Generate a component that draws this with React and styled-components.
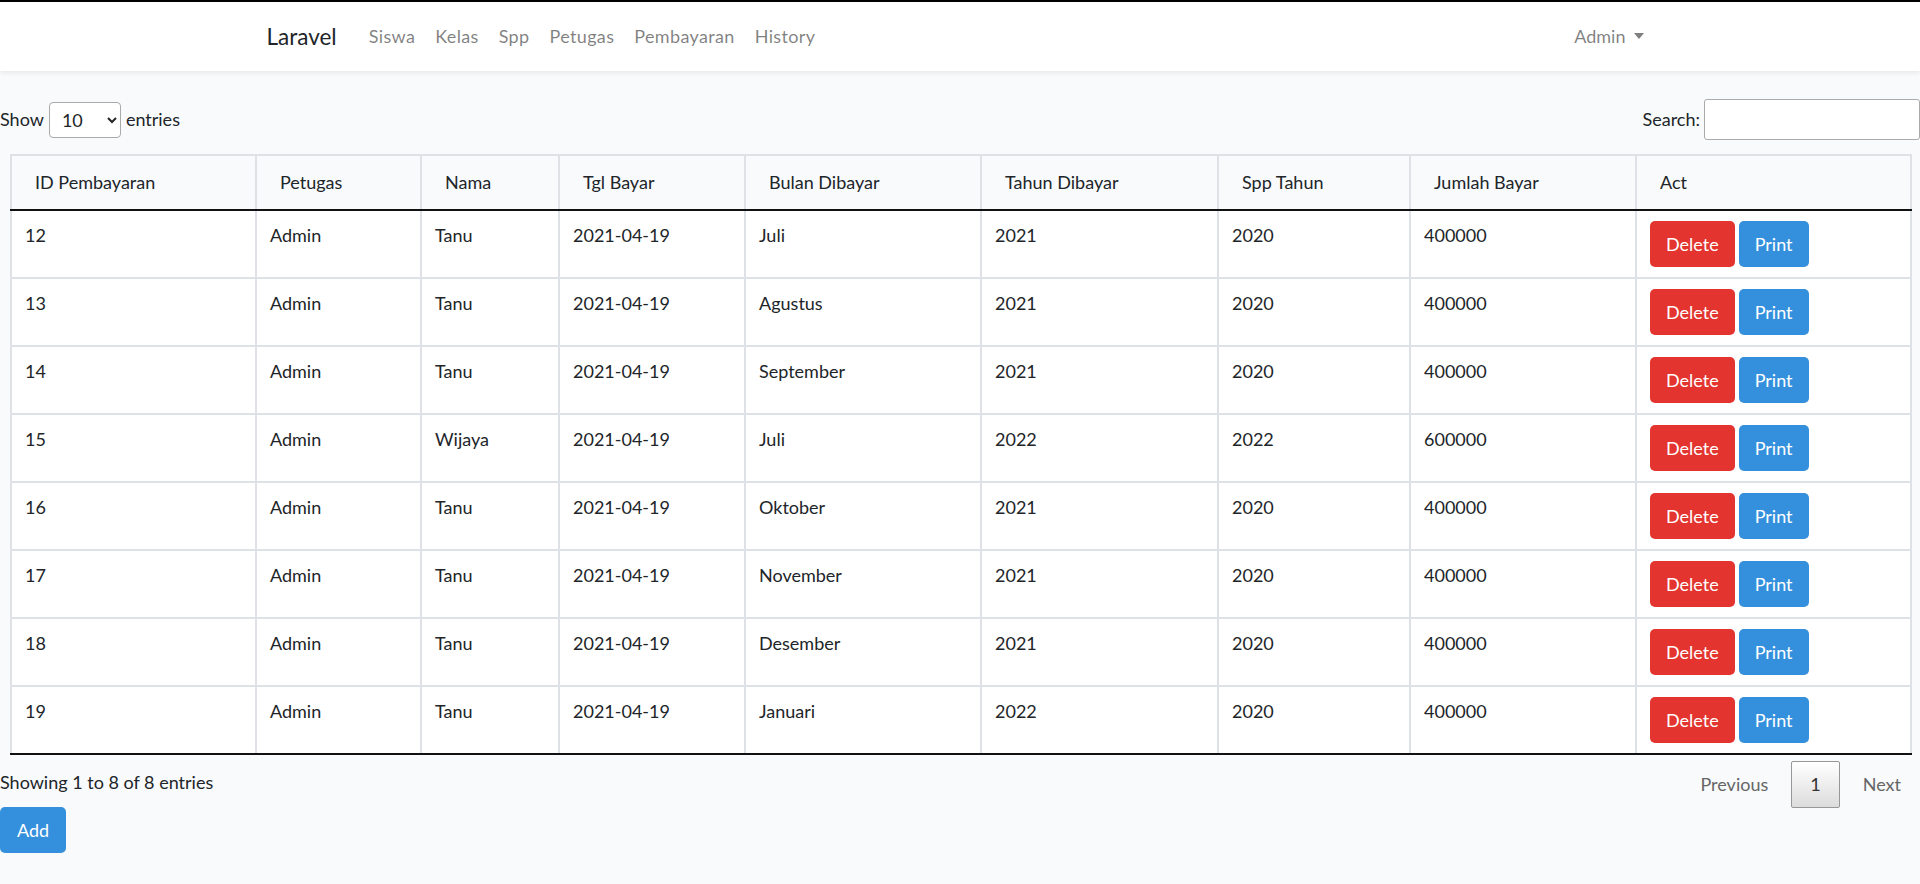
import React from 'react';
import styled, { createGlobalStyle } from 'styled-components';

const GlobalStyle = createGlobalStyle`
  body {
    margin: 0;
    background-color: #f8fafc;
    font-family: 'Lato', 'Open Sans', sans-serif;
    font-size: 18px;
    line-height: 1.6;
    color: #212529;
  }
  * { box-sizing: border-box; }
`;

const Navbar = styled.nav`
  background-color: #fff;
  border-top: 2px solid #000;
  box-shadow: 0 2px 5px rgba(0, 0, 0, 0.075);
  position: relative;
`;

const NavContainer = styled.div`
  width: 1425px;
  margin: 0 auto;
  padding: 0 19px;
  height: 69px;
  display: flex;
  align-items: center;
`;

const Brand = styled.a`
  font-size: 22.5px;
  color: #212529;
  margin-right: 22px;
  text-decoration: none;
`;

const NavLink = styled.a`
  color: rgba(0, 0, 0, 0.5);
  padding: 0 10px;
  letter-spacing: 0.35px;
  text-decoration: none;
`;

const Dropdown = styled.a`
  margin-left: auto;
  padding: 0 10px;
  color: rgba(0, 0, 0, 0.5);
  display: flex;
  align-items: center;
  &::after {
    content: '';
    margin-left: 8px;
    border-top: 6px solid rgba(0, 0, 0, 0.5);
    border-left: 5.5px solid transparent;
    border-right: 5.5px solid transparent;
  }
`;

const Main = styled.main`
  padding-top: 28px;
`;

const Toolbar = styled.div`
  display: flex;
  justify-content: space-between;
  align-items: center;
  height: 41px;
`;

const Label = styled.label`
  display: flex;
  align-items: center;
`;

const Select = styled.select`
  margin: 0 5px;
  width: 72px;
  height: 36px;
  font-family: inherit;
  font-size: 18px;
  padding: 0 8px;
  border: 1px solid #aaa;
  border-radius: 4px;
  background: #fff;
  color: #212529;
`;

const SearchInput = styled.input`
  margin-left: 4px;
  width: 216px;
  height: 41px;
  border: 1px solid #aaa;
  border-radius: 3px;
  background: #fff;
`;

const Table = styled.table`
  margin: 14px 10px 0;
  width: 1900px;
  border-collapse: collapse;
  table-layout: fixed;
`;

const Th = styled.th`
  width: ${(p) => p.$w}px;
  text-align: left;
  font-weight: 400;
  padding: 12px 22px 12px 23px;
  border: 2px solid #dee2e6;
  border-bottom: 2px solid #111;
  white-space: nowrap;
`;

const Tr = styled.tr`
  background-color: #fff;
  &:last-child td {
    border-bottom: 2px solid #111;
  }
`;

const Td = styled.td`
  vertical-align: top;
  padding: 10px 13px;
  border: 2px solid #dee2e6;
  height: 66px;
`;

const Actions = styled.div`
  display: flex;
  gap: 4px;
`;

const Button = styled.button`
  height: 46px;
  padding: 0 ${(p) => (p.$wide ? 17 : 16)}px;
  border: none;
  border-radius: 5px;
  font-family: inherit;
  font-size: 18px;
  color: #fff;
  background-color: ${(p) => (p.$variant === 'danger' ? '#e3342f' : '#3490dc')};
`;

const Footer = styled.div`
  display: flex;
  justify-content: space-between;
  align-items: flex-start;
  padding-top: 6px;
`;

const Info = styled.div`
  padding-top: 7px;
`;

const Pagination = styled.div`
  display: flex;
  align-items: center;
`;

const PageButton = styled.a`
  display: flex;
  align-items: center;
  justify-content: center;
  height: 47px;
  padding: 0 18px;
  margin-left: 4px;
  color: ${(p) => (p.$current ? '#333' : '#666')};
  border: 1px solid ${(p) => (p.$current ? '#979797' : 'transparent')};
  border-radius: 2px;
  background: ${(p) => (p.$current ? 'linear-gradient(to bottom, #fff 0%, #dcdcdc 100%)' : 'transparent')};
`;

const AddRow = styled.div`
  margin-top: -1px;
`;

const columns = [
  ['ID Pembayaran', 245],
  ['Petugas', 165],
  ['Nama', 138],
  ['Tgl Bayar', 186],
  ['Bulan Dibayar', 236],
  ['Tahun Dibayar', 237],
  ['Spp Tahun', 192],
  ['Jumlah Bayar', 226],
  ['Act', 275],
];

const rows = [
  [12, 'Admin', 'Tanu', '2021-04-19', 'Juli', 2021, 2020, 400000],
  [13, 'Admin', 'Tanu', '2021-04-19', 'Agustus', 2021, 2020, 400000],
  [14, 'Admin', 'Tanu', '2021-04-19', 'September', 2021, 2020, 400000],
  [15, 'Admin', 'Wijaya', '2021-04-19', 'Juli', 2022, 2022, 600000],
  [16, 'Admin', 'Tanu', '2021-04-19', 'Oktober', 2021, 2020, 400000],
  [17, 'Admin', 'Tanu', '2021-04-19', 'November', 2021, 2020, 400000],
  [18, 'Admin', 'Tanu', '2021-04-19', 'Desember', 2021, 2020, 400000],
  [19, 'Admin', 'Tanu', '2021-04-19', 'Januari', 2022, 2020, 400000],
];

export default function App() {
  return (
    <>
      <GlobalStyle />
      <Navbar>
        <NavContainer>
          <Brand>Laravel</Brand>
          <NavLink>Siswa</NavLink>
          <NavLink>Kelas</NavLink>
          <NavLink>Spp</NavLink>
          <NavLink>Petugas</NavLink>
          <NavLink>Pembayaran</NavLink>
          <NavLink>History</NavLink>
          <Dropdown>Admin</Dropdown>
        </NavContainer>
      </Navbar>
      <Main>
        <Toolbar>
          <Label>
            Show
            <Select defaultValue="10">
              <option>10</option>
              <option>25</option>
              <option>50</option>
              <option>100</option>
            </Select>
            entries
          </Label>
          <Label>
            Search:
            <SearchInput type="search" />
          </Label>
        </Toolbar>
        <Table>
          <thead>
            <tr>
              {columns.map(([name, w]) => (
                <Th key={name} $w={w}>{name}</Th>
              ))}
            </tr>
          </thead>
          <tbody>
            {rows.map((r) => (
              <Tr key={r[0]}>
                {r.map((v, i) => (
                  <Td key={i}>{v}</Td>
                ))}
                <Td>
                  <Actions>
                    <Button $variant="danger">Delete</Button>
                    <Button>Print</Button>
                  </Actions>
                </Td>
              </Tr>
            ))}
          </tbody>
        </Table>
        <Footer>
          <Info>Showing 1 to 8 of 8 entries</Info>
          <Pagination>
            <PageButton>Previous</PageButton>
            <PageButton $current>1</PageButton>
            <PageButton>Next</PageButton>
          </Pagination>
        </Footer>
        <AddRow>
          <Button $wide>Add</Button>
        </AddRow>
      </Main>
    </>
  );
}
